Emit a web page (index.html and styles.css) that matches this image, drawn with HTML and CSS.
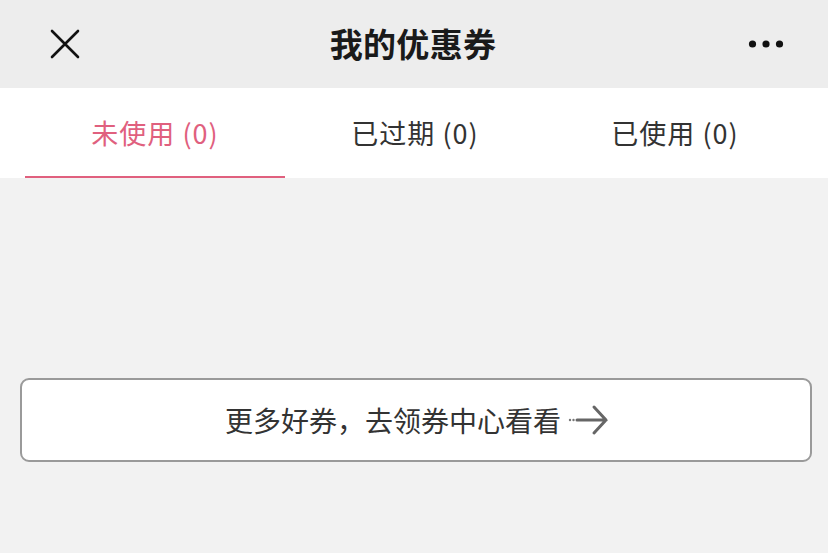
FILE: index.html
```html
<!DOCTYPE html>
<html lang="zh">
<head>
<meta charset="utf-8">
<title>我的优惠券</title>
<link rel="stylesheet" href="styles.css">
</head>
<body>
<div class="page">
  <header class="navbar">
    <div class="nav-left">
      <svg class="icon-close" width="30" height="30" viewBox="0 0 30 30">
        <path d="M2 2 L28 28 M28 2 L2 28" stroke="#111" stroke-width="2.6" stroke-linecap="round" fill="none"/>
      </svg>
    </div>
    <h1 class="nav-title">我的优惠券</h1>
    <div class="nav-right">
      <svg class="icon-more" width="36" height="10" viewBox="0 0 36 10">
        <circle cx="4.5" cy="5" r="3.6" fill="#111"/>
        <circle cx="18" cy="5" r="3.6" fill="#111"/>
        <circle cx="31.5" cy="5" r="3.6" fill="#111"/>
      </svg>
    </div>
  </header>

  <nav class="tabs">
    <div class="tab active"><span>未使用 (0)</span></div>
    <div class="tab"><span>已过期 (0)</span></div>
    <div class="tab"><span>已使用 (0)</span></div>
  </nav>

  <main class="content">
    <div class="more-btn">
      <span class="more-text">更多好券，去领券中心看看</span>
      <svg class="icon-arrow" width="42" height="32" viewBox="0 0 42 32">
        <circle cx="3" cy="16" r="1.2" fill="#777"/>
        <circle cx="6.5" cy="16" r="1.2" fill="#777"/>
        <path d="M10 16 H39 M27 3 L39 16 L27 29" stroke="#666" stroke-width="3" fill="none" stroke-linecap="round" stroke-linejoin="miter"/>
      </svg>
    </div>
  </main>
</div>
</body>
</html>
```

FILE: styles.css
```css
* { box-sizing: border-box; }
html, body {
  margin: 0;
  padding: 0;
  background: #f2f2f2;
  font-family: "Noto Sans CJK SC", "Noto Sans", sans-serif;
}
.page {
  width: 828px;
  height: 553px;
  overflow: hidden;
  background: #f2f2f2;
}
.navbar {
  height: 88px;
  background: #ededed;
  display: flex;
  align-items: center;
  justify-content: space-between;
  padding: 0 44px 0 50px;
}
.nav-left, .nav-right {
  width: 40px;
  display: flex;
  align-items: center;
}
.nav-right { justify-content: flex-end; }
.icon-close { display: block; }
.icon-more { display: block; }
.nav-title {
  margin: 0 8px 3px 0;
  font-size: 33px;
  font-weight: 600;
  color: #1a1a1a;
  letter-spacing: 0.3px;
}
.tabs {
  height: 90px;
  background: #fff;
  display: flex;
  padding: 0 23px 0 25px;
}
.tab {
  flex: 1;
  display: flex;
  align-items: center;
  justify-content: center;
  font-size: 27px;
  color: #333;
  border-bottom: 2px solid transparent;
}
.tab span { letter-spacing: 1px; }
.tab.active {
  color: #e0607e;
  border-bottom-color: #e0607e;
}
.content {
  padding: 200px 16px 0 20px;
}
.more-btn {
  height: 84px;
  background: #fff;
  border: 2px solid #9a9a9a;
  border-radius: 9px;
  display: flex;
  align-items: center;
  justify-content: center;
  gap: 6px;
  padding-left: 2px;
}
.more-text {
  font-size: 28px;
  color: #333;
}
.icon-arrow { display: block; }
```
